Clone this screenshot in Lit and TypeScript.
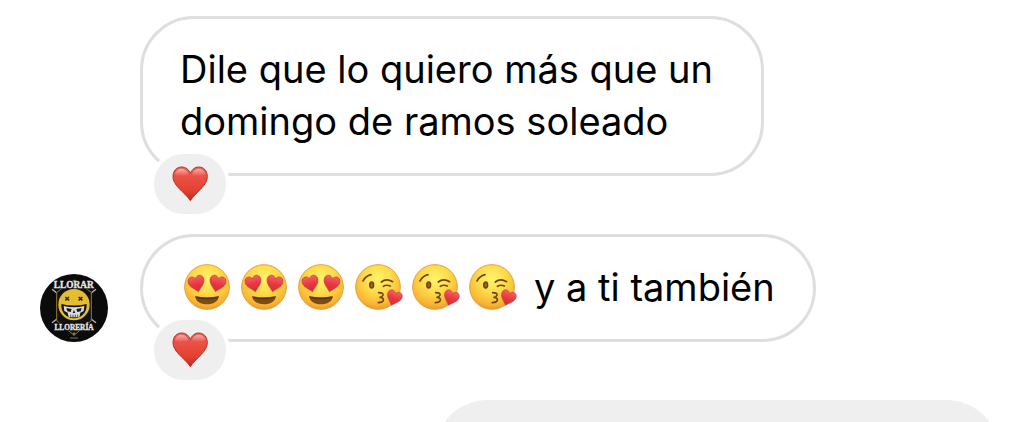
import { LitElement, html, css, svg, nothing } from "lit";
import { customElement, property } from "lit/decorators.js";

const HEART = "M0 25 C-6 16 -24 6 -24 -9 C-24 -18 -18 -23 -12 -23 C-6 -23 -2 -19 0 -14 C2 -19 6 -23 12 -23 C18 -23 24 -18 24 -9 C24 6 6 16 0 25Z";

const defs = svg`
  <defs>
    <radialGradient id="face" cx="50%" cy="32%" r="68%">
      <stop offset="0" stop-color="#fff36b"></stop>
      <stop offset="0.45" stop-color="#fddc4b"></stop>
      <stop offset="0.85" stop-color="#f8b534"></stop>
      <stop offset="1" stop-color="#e99a2b"></stop>
    </radialGradient>
    <linearGradient id="love" x1="0" y1="0" x2="0" y2="1">
      <stop offset="0" stop-color="#f4626a"></stop>
      <stop offset="0.5" stop-color="#e8383f"></stop>
      <stop offset="1" stop-color="#d42c34"></stop>
    </linearGradient>
  </defs>`;

@customElement("emoji-icon")
export class EmojiIcon extends LitElement {
  @property() kind: "eyes" | "kiss" | "heart" = "eyes";

  static styles = css`
    :host { display: block; flex: none; width: 46px; height: 46px; }
    :host([kind="heart"]) { width: 36px; height: 36px; }
    svg { display: block; width: 100%; height: 100%; overflow: visible; }
  `;

  render() {
    if (this.kind === "heart") {
      return html`<svg viewBox="0 0 108 108" role="img" aria-label="❤️">
        <defs>
          <linearGradient id="red" x1="0" y1="0" x2="0" y2="1">
            <stop offset="0" stop-color="#ea5f54"></stop>
            <stop offset="0.3" stop-color="#ea5145"></stop>
            <stop offset="0.7" stop-color="#e4402f"></stop>
            <stop offset="1" stop-color="#b92a20"></stop>
          </linearGradient>
          <linearGradient id="shine" x1="0" y1="0" x2="0" y2="1">
            <stop offset="0" stop-color="#fff" stop-opacity="0.5"></stop>
            <stop offset="1" stop-color="#fff" stop-opacity="0"></stop>
          </linearGradient>
        </defs>
        <path fill="url(#red)" stroke="#b5342c" stroke-width="3" stroke-linejoin="round" d="M55 104 C46 90 32 79 20 66 C9 54 3 44 3 32 C3 14 14 3 29 3 C41 3 50 10 55 22 C60 10 69 3 80 3 C95 3 106 14 106 32 C106 44 100 54 89 66 C77 79 64 90 55 104Z"/>
        <path fill="url(#shine)" d="M28 8 C39 8 47 15 49 25 C40 31 18 33 9 24 C11 14 19 8 28 8Z M81 8 C70 8 62 15 60 25 C69 31 91 33 100 24 C98 14 90 8 81 8Z"/>
      </svg>`;
    }
    const label = this.kind === "eyes" ? "😍" : "😘";
    return html`<svg viewBox="0 0 138 138" role="img" aria-label=${label}>
      ${defs}
      <circle cx="69" cy="69" r="67" fill="url(#face)" stroke="#e5a03a" stroke-width="3"/>
      ${this.kind === "eyes"
        ? svg`
          <path d="M33 96 Q69 104 105 96 C103 113 87 121 69 121 C51 121 35 113 33 96Z" fill="#7b4b12"></path>
          <path d="M37 100 Q69 108 101 100" fill="none" stroke="#583207" stroke-width="4"></path>
          <g fill="url(#love)" stroke="#c9393a" stroke-width="2">
            <path d=${HEART} transform="translate(38 59) rotate(-13)"></path>
            <path d=${HEART} transform="translate(100 59) rotate(13)"></path>
          </g>`
        : svg`
          <g fill="none" stroke="#6f4413" stroke-width="5" stroke-linecap="round" stroke-linejoin="round">
            <path d="M24 51 Q32 36 48 32"></path>
            <path d="M79 54 Q94 42 113 53"></path>
            <path d="M85 67 Q94 61 106 66"></path>
            <path d="M71 86 Q86 86 84 93 Q82 99 75 100 Q87 102 85 109 Q83 116 70 116"></path>
          </g>
          <ellipse cx="50" cy="63" rx="8" ry="11" fill="#6f4413"></ellipse>
          <ellipse cx="50" cy="63" rx="3" ry="6" fill="#a06f25"></ellipse>
          <path d=${HEART} transform="translate(117 102) rotate(20) scale(0.93)" fill="url(#love)" stroke="#d23c40" stroke-width="2"></path>`}
    </svg>`;
  }
}

@customElement("sender-avatar")
export class SenderAvatar extends LitElement {
  static styles = css`
    :host { display: block; width: 68px; height: 68px; }
    svg { display: block; width: 100%; height: 100%; }
    .name { font-family: "Liberation Serif", serif; font-weight: 700; font-size: 28px; fill: #e4e6e6; stroke: #e4e6e6; stroke-width: 1px; text-anchor: middle; }
    .small { font-size: 22px; }
  `;

  render() {
    return html`<svg viewBox="0 0 204 204" role="img" aria-label="Llorar Llorería">
      <circle cx="102" cy="102" r="102" fill="#0b0b0c"/>
      <path d="M36 46 L168 146 M168 46 L36 146" stroke="#b9bab5" stroke-width="4"/>
      <path d="M102 18 L154 55 V140 L102 184 L50 140 V55Z" fill="#101011" stroke="#967d28" stroke-width="3"/>
      <path d="M42 20 H162 V46 H42Z M46 146 H158 V170 H46Z" fill="#0b0b0c"/>
      <circle cx="102" cy="92" r="47" fill="#e6bd32"/>
      <path d="M64 90 Q102 99 140 90 C142 115 124 133 102 133 C80 133 62 115 64 90Z" fill="#171716"/>
      <path d="M71 96 Q102 104 133 96 L131 111 L121 116 L118 130 H86 L83 116 L73 111Z" fill="#dadddc"/>
      <path d="M79 102 L95 105 L92 114 L82 112Z M125 102 L109 105 L112 114 L122 112Z M102 108 L106 117 H98Z" fill="#171716"/>
      <path d="M92 122 V130 M99 122 V130 M106 122 V130 M113 122 V130" stroke="#171716" stroke-width="2"/>
      <path d="M76 69 L87 79 M87 69 L76 79 M116 69 L127 79 M127 69 L116 79" stroke="#302a12" stroke-width="5"/>
      <text class="name" x="101" y="43">LLORAR</text>
      <text class="name small" x="102" y="167">LLORERÍA</text>
      <path d="M102 173 L106 179 L102 185 L98 179Z" fill="#967d28"/>
      <path d="M90 192 H114" stroke="#77777a" stroke-width="3"/>
    </svg>`;
  }
}

@customElement("chat-message")
export class ChatMessage extends LitElement {
  @property({ type: Boolean }) avatar = false;

  static styles = css`
    :host {
      display: grid;
      grid-template-columns: 68px minmax(0, 1fr);
      column-gap: 32px;
      align-items: end;
      justify-items: start;
    }
    .bubble {
      grid-column: 2;
      box-sizing: border-box;
      max-width: var(--bubble-max, 100%);
      padding: 24px 38px 26px 37px;
      border: 3px solid #dedede;
      border-radius: 54px;
      font-size: 38px;
      line-height: 52px;
    }
    .reaction {
      grid-column: 2;
      display: grid;
      place-items: center;
      width: 72px;
      height: 60px;
      margin: -22px 0 0 14px;
      padding: 0;
      border: 0;
      border-radius: 30px;
      background: #efefef;
      box-shadow: 0 0 0 4px #fff;
    }
  `;

  render() {
    return html`
      ${this.avatar ? html`<sender-avatar></sender-avatar>` : nothing}
      <div class="bubble"><slot></slot></div>
      <button class="reaction" type="button" aria-label="Me gusta"><emoji-icon kind="heart"></emoji-icon></button>
    `;
  }
}

@customElement("app-root")
export class AppRoot extends LitElement {
  static styles = css`
    :host {
      box-sizing: border-box;
      display: flex;
      flex-direction: column;
      gap: 20px;
      height: 100vh;
      overflow: hidden;
      padding: 16px 24px 0 40px;
      background: #fff;
      color: #000;
      font-family: Inter, "Liberation Sans", sans-serif;
    }
    chat-message { flex: none; }
    .wrapped { --bubble-max: 624px; }
    .line { display: flex; align-items: center; gap: 19px; padding-left: 4px; }
    .emojis { display: flex; gap: 11px; }
    .own {
      flex: none;
      align-self: flex-end;
      width: 59%;
      min-height: 108px;
      border-radius: 54px;
      background: #efefef;
    }
  `;

  render() {
    const emojis = ["eyes", "eyes", "eyes", "kiss", "kiss", "kiss"];
    return html`
      <chat-message class="wrapped">Dile que lo quiero más que un domingo de ramos soleado</chat-message>
      <chat-message avatar>
        <div class="line">
          <span class="emojis">${emojis.map((k) => html`<emoji-icon kind=${k}></emoji-icon>`)}</span>
          <span>y a ti también</span>
        </div>
      </chat-message>
      <div class="own"></div>
    `;
  }
}
